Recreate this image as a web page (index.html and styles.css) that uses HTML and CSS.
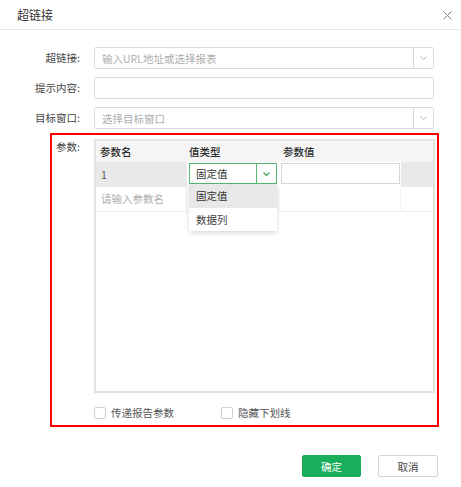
FILE: index.html
```html
<!DOCTYPE html>
<html lang="zh">
<head>
<meta charset="utf-8">
<title>超链接</title>
<link rel="stylesheet" href="styles.css">
</head>
<body>
<div class="dialog">
  <div class="header">
    <span class="title">超链接</span>
    <svg class="close" width="9" height="9" viewBox="0 0 9 9"><path d="M0.5 0.5L8.5 8.5M8.5 0.5L0.5 8.5" stroke="#8a8a8a" stroke-width="1" fill="none"/></svg>
  </div>

  <div class="form">
    <div class="row">
      <label class="label">超链接:</label>
      <div class="input combo">
        <span class="ph">输入URL地址或选择报表</span>
        <span class="arrow"><svg width="7" height="4" viewBox="0 0 7 4"><path d="M0.5 0.5L3.5 3.5L6.5 0.5" stroke="#b5b5b5" fill="none"/></svg></span>
      </div>
    </div>
    <div class="row">
      <label class="label">提示内容:</label>
      <div class="input"></div>
    </div>
    <div class="row">
      <label class="label">目标窗口:</label>
      <div class="input combo">
        <span class="ph">选择目标窗口</span>
        <span class="arrow"><svg width="7" height="4" viewBox="0 0 7 4"><path d="M0.5 0.5L3.5 3.5L6.5 0.5" stroke="#b5b5b5" fill="none"/></svg></span>
      </div>
    </div>
  </div>

  <div class="params">
    <div class="plabel">参数:</div>
    <div class="pbody">
      <div class="table">
        <div class="tr thead">
          <div class="c1">参数名</div>
          <div class="c2">值类型</div>
          <div class="c3">参数值</div>
          <div class="c4"></div>
        </div>
        <div class="tr active">
          <div class="c1 gray">1</div>
          <div class="c2">
            <div class="select">
              <span class="sval">固定值</span>
              <span class="sarrow"><svg width="7" height="4" viewBox="0 0 7 4"><path d="M0.5 0.5L3.5 3.5L6.5 0.5" stroke="#3daa5e" stroke-width="1.2" fill="none"/></svg></span>
              <div class="menu">
                <div class="item sel">固定值</div>
                <div class="item">数据列</div>
              </div>
            </div>
          </div>
          <div class="c3"><div class="vinput"></div></div>
          <div class="c4 gray"></div>
        </div>
        <div class="tr newrow">
          <div class="c1 ph">请输入参数名</div>
          <div class="c2"></div>
          <div class="c3"></div>
          <div class="c4"></div>
        </div>
      </div>
      <div class="checks">
        <label class="check first"><span class="box"></span>传递报告参数</label>
        <label class="check"><span class="box"></span>隐藏下划线</label>
      </div>
    </div>
  </div>

  <div class="footer">
    <button class="btn primary">确定</button>
    <button class="btn">取消</button>
  </div>
</div>
</body>
</html>
```

FILE: styles.css
```css
* { box-sizing: border-box; }
html, body { margin: 0; padding: 0; background: #fff; }
body {
  font-family: "Noto Sans CJK SC", "Noto Sans", sans-serif;
  font-size: 10.5px;
  color: #444;
}
.dialog { width: 461px; height: 487px; }

.header {
  height: 30px;
  border-bottom: 1px solid #e6e6e6;
  display: flex;
  align-items: center;
  justify-content: space-between;
  padding: 0 9px 0 17px;
}
.title { font-size: 12px; color: #333; line-height: 29px; }
.close { display: block; margin-top: 1px; }

.form { padding-top: 17px; display: flex; flex-direction: column; gap: 8px; }
.row {
  display: grid;
  grid-template-columns: 80px 340px;
  column-gap: 14px;
  align-items: center;
}
.label { text-align: right; color: #444; line-height: 22px; }
.input {
  height: 22px;
  border: 1px solid #dadada;
  border-radius: 2px;
  background: #fff;
  display: flex;
  align-items: center;
  padding-left: 7px;
}
.combo { padding-left: 0; }
.combo .ph { flex: 1; padding-left: 7px; }
.ph { color: #adadad; }
.arrow {
  width: 20px;
  height: 100%;
  border-left: 1px solid #dadada;
  display: flex;
  align-items: center;
  justify-content: center;
}
.arrow svg, .sarrow svg { display: block; }

.params {
  margin: 4px 22px 0 50px;
  border: 2px solid #f00;
  padding: 4px 2px 4px 0;
  display: grid;
  grid-template-columns: 28px 341px;
  column-gap: 14px;
}
.plabel { text-align: right; line-height: 16px; color: #444; }

.table {
  height: 254px;
  border: 2px solid #e3e3e3;
  background: #fff;
}
.tr {
  display: grid;
  grid-template-columns: 91px 92px 122px 32px;
}
.thead { height: 21px; background: #f5f5f5; line-height: 21px; color: #2b2b2b; font-weight: 500; }
.thead .c1 { padding-left: 4px; }
.thead .c2 { padding-left: 2px; }
.thead .c3 { padding-left: 4px; }
.active { height: 25px; }
.active > div { height: 25px; }
.gray { background: #e9e9e9; }
.active .c1 { padding-left: 5px; line-height: 25px; color: #555; }
.active .c2 { padding: 1px 2px 0 2px; }
.active .c3 { padding: 1px 1px 0 2px; }
.newrow { height: 25px; border-bottom: 1px solid #f0f0f0; }
.newrow > div { border-right: 1px solid #f2f2f2; line-height: 24px; }
.newrow .c1 { padding-left: 5px; }
.newrow .c4 { border-right: 0; }

.select {
  position: relative;
  height: 21px;
  border: 1px solid #54b872;
  display: flex;
  background: #fff;
}
.sval { flex: 1; padding-left: 6px; line-height: 19px; color: #333; }
.sarrow {
  width: 20px;
  border-left: 1px solid #54b872;
  display: flex;
  align-items: center;
  justify-content: center;
}
.menu {
  position: absolute;
  left: -1px;
  top: 20px;
  width: 88px;
  background: #fff;
  box-shadow: 0 2px 5px rgba(0, 0, 0, 0.15);
  z-index: 2;
}
.item { height: 23px; line-height: 23px; padding-left: 7px; color: #444; }
.item.sel { background: #e8e8e8; height: 24px; line-height: 24px; color: #333; }
.vinput { height: 21px; border: 1px solid #d6d6d6; background: #fff; }

.checks {
  display: flex;
  align-items: center;
  height: 16px;
  margin-top: 12px;
}
.check { display: flex; align-items: center; gap: 5px; color: #555; line-height: 16px; }
.check.first { margin-right: 47px; }
.box {
  width: 12px;
  height: 12px;
  border: 1px solid #d0d0d0;
  border-radius: 2px;
  background: #fff;
}

.footer {
  display: flex;
  justify-content: flex-end;
  gap: 17px;
  padding-right: 23px;
  margin-top: 28px;
}
.btn {
  width: 60px;
  height: 22px;
  border: 1px solid #d4d4d4;
  border-radius: 2px;
  background: #fff;
  font-family: inherit;
  font-size: 10.5px;
  color: #444;
  padding: 0;
}
.btn.primary { background: #1aad5c; border-color: #1aad5c; color: #fff; width: 59px; }
```
